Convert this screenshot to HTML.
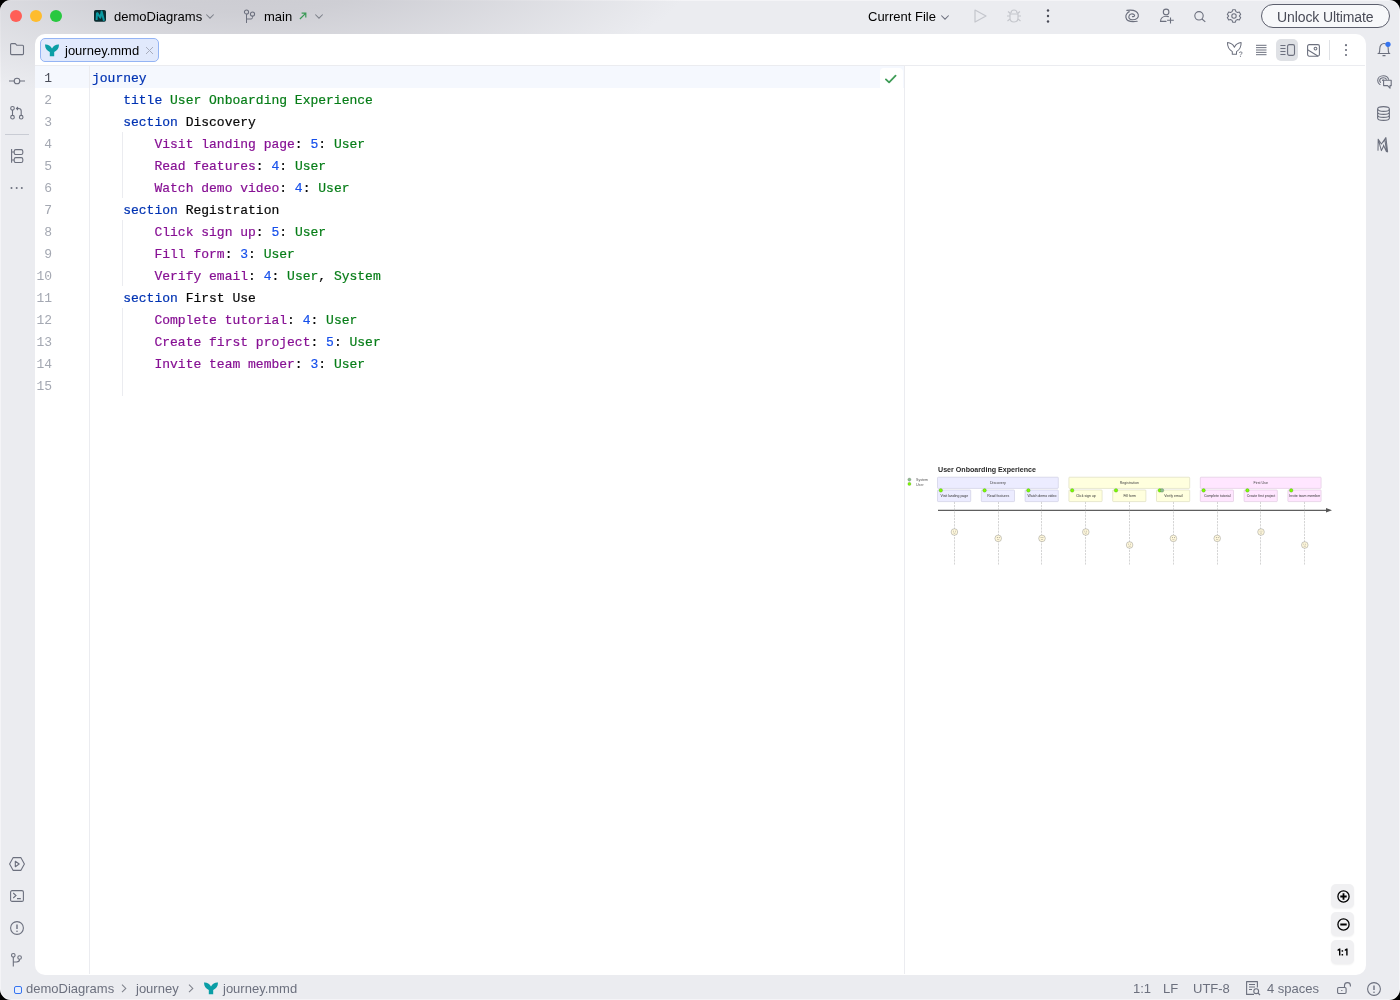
<!DOCTYPE html>
<html><head><meta charset="utf-8">
<style>
*{margin:0;padding:0;box-sizing:border-box}
html,body{width:1400px;height:1000px;overflow:hidden;background:#000}
body{font-family:"Liberation Sans",sans-serif;position:relative}
#win{will-change:transform;position:absolute;left:0;top:0;width:1400px;height:1000px;border-radius:11px;box-shadow:inset 0 0 0 1px rgba(255,255,255,0.45);overflow:hidden;background:#ebecf0}
#glow{position:absolute;left:-200px;top:-190px;width:900px;height:300px;border-radius:50%;
 background:radial-gradient(closest-side,rgba(201,201,207,1),rgba(204,204,210,0.92) 35%,rgba(235,236,240,0) 100%)}
.abs{position:absolute}
.tl{position:absolute;width:12px;height:12px;border-radius:50%;top:10px}
.ui{position:absolute;font-size:13px;color:#000;white-space:nowrap;line-height:16px}
svg.i{position:absolute;overflow:visible}
#editor{position:absolute;left:35px;top:34px;width:1330.5px;height:940.6px;background:#fff;border-radius:10px;overflow:hidden}
.code{position:absolute;left:57px;top:34px;-webkit-text-stroke:0.2px;font-family:"Liberation Mono",monospace;font-size:13px;line-height:22px;white-space:pre;color:#080808}
.ln{position:absolute;left:0;top:34px;width:17px;text-align:right;font-family:"Liberation Mono",monospace;font-size:13px;line-height:22px;color:#a4a8b2;white-space:pre}
.kw{color:#0033b3}
.str{color:#067d17}
.task{color:#871094}
.num{color:#1750eb}
.sb{position:absolute;top:981px;font-size:13px;line-height:16px;color:#6c707e;white-space:nowrap}
.zb{position:absolute;left:1296px;width:23px;height:23.5px;border-radius:5px;background:#f0f0f2;box-shadow:0 1px 2px rgba(0,0,0,0.06)}
</style></head>
<body>
<div id="win">
 <div id="glow"></div>
 <!-- traffic lights -->
 <div class="tl" style="left:10px;background:#ff5f57"></div>
 <div class="tl" style="left:30px;background:#febc2e"></div>
 <div class="tl" style="left:50px;background:#28c840"></div>

 <!-- title bar: project -->
 <svg class="i" style="left:94px;top:10px" width="12" height="12" viewBox="0 0 12 12">
  <rect x="0" y="0" width="12" height="11.8" rx="1.8" fill="#0a2d31"/>
  <path d="M3 2.6 L2.6 10 M3 2.6 L6.4 7.6 L7.6 1.6 L10 10.8" fill="none" stroke="#0a9aa2" stroke-width="2" stroke-linejoin="round"/>
 </svg>
 <div class="ui" style="left:114px;top:9px">demoDiagrams</div>
 <svg class="i" style="left:206px;top:14px" width="8" height="5" viewBox="0 0 8 5"><path d="M0.3 0.5 L4 4.2 L7.7 0.5" fill="none" stroke="#7d808a" stroke-width="1.05"/></svg>

 <!-- branch -->
 <svg class="i" style="left:243px;top:9px" width="14" height="15" viewBox="0 0 14 15">
  <circle cx="3.5" cy="3" r="2.1" fill="none" stroke="#6c707e" stroke-width="1.05"/>
  <circle cx="9.5" cy="5" r="2.1" fill="none" stroke="#6c707e" stroke-width="1.05"/>
  <path d="M3.5 5 V14 M9.5 7 V8.5 Q9.5 10 8 10 H3.5" fill="none" stroke="#6c707e" stroke-width="1"/>
 </svg>
 <div class="ui" style="left:264px;top:9px">main</div>
 <svg class="i" style="left:299px;top:12px" width="8" height="8" viewBox="0 0 8 8"><path d="M0.9 7 L6.6 1.3 M2.6 1.2 H6.8 V5.4" fill="none" stroke="#3a9a55" stroke-width="1.2"/></svg>
 <svg class="i" style="left:315px;top:14px" width="8" height="5" viewBox="0 0 8 5"><path d="M0.3 0.5 L4 4.2 L7.7 0.5" fill="none" stroke="#7d808a" stroke-width="1.05"/></svg>

 <!-- right toolbar -->
 <div class="ui" style="left:868px;top:9px">Current File</div>
 <svg class="i" style="left:941px;top:15px" width="8" height="5" viewBox="0 0 8 5"><path d="M0.3 0.5 L4 4.2 L7.7 0.5" fill="none" stroke="#6c707e" stroke-width="1.05"/></svg>
 <svg class="i" style="left:974px;top:9px" width="13" height="14" viewBox="0 0 13 14"><path d="M1 1 L12 7 L1 13 Z" fill="none" stroke="#c4c6cc" stroke-width="1.2" stroke-linejoin="round"/></svg>
 <svg class="i" style="left:1006px;top:9px" width="16" height="14" viewBox="0 0 16 14">
  <path d="M5 4 Q5 1 8 1 Q11 1 11 4 M4 5 H12 V9 Q12 13 8 13 Q4 13 4 9 Z M4 7 H1 M12 7 H15 M4 10 L1.5 12 M12 10 L14.5 12 M4.5 4.5 L2 2.5 M11.5 4.5 L14 2.5" fill="none" stroke="#c4c6cc" stroke-width="1.1"/>
 </svg>
 <svg class="i" style="left:1046px;top:9px" width="4" height="14" viewBox="0 0 4 14"><circle cx="2" cy="1.5" r="1.2" fill="#494b57"/><circle cx="2" cy="7" r="1.2" fill="#494b57"/><circle cx="2" cy="12.5" r="1.2" fill="#494b57"/></svg>

 <svg class="i" style="left:1120px;top:5px" width="60" height="23" viewBox="0 0 1400 537">
  <path d="M160 125 C280 110 400 130 425 220 C445 300 380 345 290 345 C220 345 195 300 210 255 C225 205 290 195 330 225 C355 250 330 280 290 270 M400 380 C330 392 250 395 190 365 C130 330 120 250 160 200 C175 180 195 165 215 155" fill="none" stroke="#6c707e" stroke-width="27" stroke-linecap="round"/>
 </svg>
 <svg class="i" style="left:1159px;top:8px" width="16" height="16" viewBox="0 0 16 16">
  <circle cx="7.1" cy="3.9" r="2.8" fill="none" stroke="#6c707e" stroke-width="1.1"/>
  <path d="M9.4 8.6 C8.6 8.4 7.8 8.3 7 8.3 C4 8.3 1.6 10.5 1.5 13.4 H7" fill="none" stroke="#6c707e" stroke-width="1.1" stroke-linecap="round"/>
  <path d="M11.5 9.4 V15.6 M8.1 12.3 H14.8" fill="none" stroke="#6c707e" stroke-width="1.1"/>
 </svg>
 <svg class="i" style="left:1194px;top:11px" width="12" height="11" viewBox="0 0 12 11">
  <circle cx="5" cy="4.8" r="4.2" fill="none" stroke="#6c707e" stroke-width="1.1"/>
  <path d="M8 8 L11.3 10.8" fill="none" stroke="#6c707e" stroke-width="1.1"/>
 </svg>
 <svg class="i" style="left:1227px;top:9px" width="14" height="14" viewBox="0 0 14 14">
  <path d="M5.6 0.8 H8.4 L8.9 2.6 L10.5 3.5 L12.3 3 L13.7 5.4 L12.4 6.8 V7.2 L13.7 8.6 L12.3 11 L10.5 10.5 L8.9 11.4 L8.4 13.2 H5.6 L5.1 11.4 L3.5 10.5 L1.7 11 L0.3 8.6 L1.6 7.2 V6.8 L0.3 5.4 L1.7 3 L3.5 3.5 L5.1 2.6 Z" fill="none" stroke="#6c707e" stroke-width="1.05" stroke-linejoin="round"/>
  <circle cx="7" cy="7" r="2.2" fill="none" stroke="#6c707e" stroke-width="1.05"/>
 </svg>
 <div class="abs" style="left:1261px;top:4.2px;width:129px;height:23.4px;border:1.6px solid #5c5f6d;border-radius:12px;background:#f7f8fa"></div>
 <div class="ui" style="left:1277px;top:9px;font-size:14px;letter-spacing:-0.1px;color:#494b57">Unlock Ultimate</div>

 <!-- left strip icons -->
 <svg class="i" style="left:10px;top:43px" width="15" height="12" viewBox="0 0 15 12">
  <path d="M0.6 1.6 Q0.6 0.6 1.6 0.6 H5.3 L6.9 2.3 H12.5 Q13.5 2.3 13.5 3.3 V10.6 Q13.5 11.6 12.5 11.6 H1.6 Q0.6 11.6 0.6 10.6 Z" fill="none" stroke="#6c707e" stroke-width="1.1" stroke-linejoin="round"/>
 </svg>
 <svg class="i" style="left:9px;top:76px" width="16" height="10" viewBox="0 0 16 10">
  <circle cx="8" cy="5" r="2.8" fill="none" stroke="#6c707e" stroke-width="1.1"/>
  <path d="M0 5 H5.2 M10.8 5 H16" stroke="#6c707e" stroke-width="1.1"/>
 </svg>
 <svg class="i" style="left:10px;top:106px" width="15" height="14" viewBox="0 0 15 14">
  <circle cx="2.5" cy="2.3" r="1.8" fill="none" stroke="#6c707e" stroke-width="1.1"/>
  <circle cx="2.5" cy="11.2" r="1.8" fill="none" stroke="#6c707e" stroke-width="1.1"/>
  <circle cx="11.2" cy="11.2" r="1.8" fill="none" stroke="#6c707e" stroke-width="1.1"/>
  <path d="M2.5 4.1 V9.4 M11.2 9.4 V5 Q11.2 2.5 8.7 2.5 H6.5 M8 1 L6.5 2.5 L8 4" fill="none" stroke="#6c707e" stroke-width="1.1"/>
 </svg>
 <div class="abs" style="left:5px;top:134px;width:24px;height:1px;background:#c9ccd4"></div>
 <svg class="i" style="left:11px;top:148px" width="13" height="16" viewBox="0 0 13 16">
  <path d="M0.6 1 V14.8 M0.6 4 H3.2 M0.6 12 H3.2" fill="none" stroke="#6c707e" stroke-width="1.1"/>
  <rect x="3.2" y="1.6" width="8.6" height="4.9" rx="1.6" fill="none" stroke="#6c707e" stroke-width="1.1"/>
  <rect x="3.2" y="9.6" width="8.6" height="4.9" rx="1.6" fill="none" stroke="#6c707e" stroke-width="1.1"/>
 </svg>
 <svg class="i" style="left:10px;top:186px" width="14" height="4" viewBox="0 0 14 4">
  <circle cx="1.5" cy="2" r="1" fill="#6c707e"/><circle cx="6.7" cy="2" r="1" fill="#6c707e"/><circle cx="11.8" cy="2" r="1" fill="#6c707e"/>
 </svg>

 <svg class="i" style="left:9px;top:857px" width="16" height="14" viewBox="0 0 16 14">
  <path d="M4.2 0.6 H11.8 L15.4 7 L11.8 13.4 H4.2 L0.6 7 Z" fill="none" stroke="#6c707e" stroke-width="1.1" stroke-linejoin="round"/>
  <path d="M6.3 4.3 L10.2 7 L6.3 9.7 Z" fill="none" stroke="#6c707e" stroke-width="1.1" stroke-linejoin="round"/>
 </svg>
 <svg class="i" style="left:10px;top:890px" width="14" height="12" viewBox="0 0 14 12">
  <rect x="0.6" y="0.6" width="12.8" height="10.8" rx="1.5" fill="none" stroke="#6c707e" stroke-width="1.1"/>
  <path d="M3.2 3 L6 5.5 L3.2 8 M7 8.6 H10.8" fill="none" stroke="#6c707e" stroke-width="1.1"/>
 </svg>
 <svg class="i" style="left:10px;top:921px" width="14" height="14" viewBox="0 0 14 14">
  <circle cx="7" cy="7" r="6.4" fill="none" stroke="#6c707e" stroke-width="1.1"/>
  <path d="M7 3.5 V8" stroke="#6c707e" stroke-width="1.4"/><circle cx="7" cy="10.2" r="0.8" fill="#6c707e"/>
 </svg>
 <svg class="i" style="left:11px;top:953px" width="11" height="14" viewBox="0 0 11 14">
  <circle cx="2.3" cy="2.3" r="1.8" fill="none" stroke="#6c707e" stroke-width="1.1"/>
  <circle cx="8.6" cy="4.5" r="1.8" fill="none" stroke="#6c707e" stroke-width="1.1"/>
  <path d="M2.3 4.1 V13.5 M8.6 6.3 Q8.6 9 5.5 9 H2.3" fill="none" stroke="#6c707e" stroke-width="1.1"/>
 </svg>

 <!-- right strip icons -->
 <svg class="i" style="left:1377px;top:42px" width="14" height="15" viewBox="0 0 14 15">
  <path d="M2 11.5 C2.8 10 2.8 9 2.8 6.5 C2.8 3.5 4.8 1.5 7 1.5 C9.2 1.5 11.2 3.5 11.2 6.5 C11.2 9 11.2 10 12 11.5 Z M0.6 11.5 H13.2 M5.5 13.6 H8.5" fill="none" stroke="#6c707e" stroke-width="1.1" stroke-linejoin="round"/>
  <circle cx="11" cy="2.3" r="2.6" fill="#3574f0"/>
 </svg>
 <svg class="i" style="left:1377px;top:75px" width="15" height="14" viewBox="0 0 15 14">
  <path d="M3 9.5 C1.3 8.5 0.7 7 0.7 5.5 C0.7 2.8 3 0.7 6.3 0.7 C9 0.7 11 2.2 11.6 4.3 M3.5 7.3 C3 6.8 2.7 6.1 2.7 5.5 C2.7 3.8 4.2 2.7 6.3 2.7 C7.7 2.7 8.9 3.3 9.4 4.3 M5.6 5.4 C5.6 5 5.9 4.7 6.3 4.7" fill="none" stroke="#6c707e" stroke-width="1.1" stroke-linecap="round"/>
  <path d="M6.6 5.2 H14.2 V10.6 H13 V13.2 L10.6 10.6 H6.6 Z" fill="#ebecf0" stroke="#6c707e" stroke-width="1.1" stroke-linejoin="round"/>
 </svg>
 <svg class="i" style="left:1377px;top:106px" width="13" height="15" viewBox="0 0 13 15">
  <ellipse cx="6.5" cy="3" rx="5.9" ry="2.4" fill="none" stroke="#6c707e" stroke-width="1.1"/>
  <path d="M0.6 3 V12 C0.6 13.3 3.2 14.4 6.5 14.4 C9.8 14.4 12.4 13.3 12.4 12 V3 M0.6 6 C0.6 7.3 3.2 8.4 6.5 8.4 C9.8 8.4 12.4 7.3 12.4 6 M0.6 9 C0.6 10.3 3.2 11.4 6.5 11.4 C9.8 11.4 12.4 10.3 12.4 9" fill="none" stroke="#6c707e" stroke-width="1.1"/>
 </svg>
 <svg class="i" style="left:1377px;top:137px" width="12" height="16" viewBox="0 0 12 16">
  <path d="M1.2 2.2 L1 13.2 M1.2 2.2 L4.4 7 L8.9 0.6 M1.2 2.2 L4.4 13.6 L6.6 9 M8.9 0.6 L10.6 14.9 M8.2 2.2 L6.2 5 M8 3.5 L9.6 14.6 M6.4 8 L9.4 14.6" fill="none" stroke="#6c707e" stroke-width="1.05" stroke-linejoin="round" stroke-linecap="round"/>
 </svg>

 <!-- status bar -->
 <div class="abs" style="left:14px;top:985.5px;width:8px;height:8px;border:1.2px solid #3574f0;border-radius:2px;background:#e8eefc"></div>
 <div class="sb" style="left:26px">demoDiagrams</div>
 <svg class="i" style="left:121px;top:984px" width="6" height="9" viewBox="0 0 6 9"><path d="M1 0.6 L4.8 4.4 L1 8.2" fill="none" stroke="#7f828c" stroke-width="1.05"/></svg>
 <div class="sb" style="left:136px">journey</div>
 <svg class="i" style="left:188px;top:984px" width="6" height="9" viewBox="0 0 6 9"><path d="M1 0.6 L4.8 4.4 L1 8.2" fill="none" stroke="#7f828c" stroke-width="1.05"/></svg>
 <svg class="i" style="left:204px;top:982px" width="14" height="12" viewBox="0 0 14 12">
  <path d="M0 0.6 C2.5 0.3 5.5 1.5 7 4.5 C8.5 1.5 11.5 0.3 14 0.6 C14 4.5 12 7 9.2 8 V12.3 H4.8 V8 C2 7 0 4.5 0 0.6 Z" fill="#0a9ea6"/>
 </svg>
 <div class="sb" style="left:223px">journey.mmd</div>

 <div class="sb" style="left:1133px">1:1</div>
 <div class="sb" style="left:1163px">LF</div>
 <div class="sb" style="left:1193px">UTF-8</div>
 <svg class="i" style="left:1246px;top:981px" width="15" height="15" viewBox="0 0 15 15">
  <path d="M8 13.4 H0.6 V0.6 H11.4 V6.5" fill="none" stroke="#6c707e" stroke-width="1.1" stroke-linejoin="round"/>
  <path d="M3 3.5 H9 M3 6 H9 M3 8.5 H6" stroke="#6c707e" stroke-width="1.1"/>
  <circle cx="10.2" cy="10.2" r="2.4" fill="none" stroke="#6c707e" stroke-width="1.1"/>
  <path d="M12 12 L14 14" stroke="#6c707e" stroke-width="1.1"/>
 </svg>
 <div class="sb" style="left:1267px">4 spaces</div>
 <svg class="i" style="left:1337px;top:982px" width="14" height="12" viewBox="0 0 14 12">
  <rect x="0.6" y="5.5" width="8.5" height="6" rx="1.2" fill="none" stroke="#6c707e" stroke-width="1.1"/>
  <path d="M7.5 5.5 V3.5 C7.5 1.8 8.8 0.6 10.5 0.6 C12.2 0.6 13.4 1.8 13.4 3.5 V4.5" fill="none" stroke="#6c707e" stroke-width="1.1"/>
  <path d="M4.8 8 V9" stroke="#6c707e" stroke-width="1.2"/>
 </svg>
 <svg class="i" style="left:1367px;top:982px" width="14" height="14" viewBox="0 0 14 14">
  <circle cx="7" cy="7" r="6.4" fill="none" stroke="#6c707e" stroke-width="1.1"/>
  <path d="M7 3.5 V8" stroke="#6c707e" stroke-width="1.4"/><circle cx="7" cy="10.2" r="0.8" fill="#6c707e"/>
 </svg>

 <!-- editor -->
 <div id="editor">
  <!-- tab -->
  <div class="abs" style="left:5px;top:4px;width:119px;height:24px;border:1px solid #94b4f4;border-radius:5px;background:#e1e9fc"></div>
  <svg class="i" style="left:10px;top:9.5px" width="14" height="12" viewBox="0 0 14 12">
   <path d="M0 0.6 C2.5 0.3 5.5 1.5 7 4.5 C8.5 1.5 11.5 0.3 14 0.6 C14 4.5 12 7 9.2 8 V12.3 H4.8 V8 C2 7 0 4.5 0 0.6 Z" fill="#0a9ea6"/>
  </svg>
  <div class="ui" style="left:30px;top:9px">journey.mmd</div>
  <svg class="i" style="left:110.5px;top:13px" width="7" height="7" viewBox="0 0 7 7"><path d="M0 0 L7 7 M7 0 L0 7" stroke="#a8adbd" stroke-width="1"/></svg>

  <!-- editor toolbar -->
  <svg class="i" style="left:1191px;top:8px" width="18" height="16" viewBox="0 0 18 16">
   <path d="M1.5 0.6 C4.5 0.8 7 2.5 8.4 5.2 C9.8 2.5 12.3 0.8 15.1 0.6 C15.3 4.5 13 8 10.5 9.6 V12.3 H6.3 V9.6 C3.8 8 1.3 4.5 1.5 0.6 Z" fill="none" stroke="#6c707e" stroke-width="1.05" stroke-linejoin="round"/>
   <path d="M13.4 11 C13.4 10.2 14 9.9 14.7 9.9 C15.5 9.9 16.2 10.3 16.2 11 C16.2 11.8 14.4 12.4 14.4 13.3" fill="none" stroke="#6c707e" stroke-width="0.9"/>
   <circle cx="14.4" cy="14.5" r="0.55" fill="#6c707e"/>
  </svg>
  <svg class="i" style="left:1220.5px;top:10px" width="11" height="12" viewBox="0 0 11 12">
   <path d="M0 1.3 H10.5 M0 3.65 H10.5 M0 6 H10.5 M0 8.35 H10.5 M0 10.7 H10.5" stroke="#6c707e" stroke-width="1"/>
  </svg>
  <div class="abs" style="left:1241px;top:5px;width:22px;height:22px;border-radius:5px;background:#dfe1e5"></div>
  <svg class="i" style="left:1244.5px;top:10px" width="15" height="12" viewBox="0 0 15 12">
   <path d="M0.4 1.5 H5.5 M0.4 4.5 H5.5 M0.4 7.5 H5.5 M0.4 10.5 H5.5" stroke="#6c707e" stroke-width="1.05"/>
   <rect x="7.6" y="0.6" width="6.9" height="10.8" rx="1.6" fill="none" stroke="#6c707e" stroke-width="1.1"/>
  </svg>
  <svg class="i" style="left:1271.5px;top:9.5px" width="13" height="13" viewBox="0 0 13 13">
   <rect x="0.6" y="0.6" width="11.8" height="11.6" rx="1.6" fill="none" stroke="#6c707e" stroke-width="1.1"/>
   <circle cx="8.5" cy="4.6" r="1.4" fill="none" stroke="#6c707e" stroke-width="1.05"/>
   <path d="M0.6 5.8 L10.8 12" stroke="#6c707e" stroke-width="1.1"/>
  </svg>
  <div class="abs" style="left:1294px;top:6px;width:1px;height:20px;background:#dfe1e5"></div>
  <svg class="i" style="left:1309px;top:10px" width="4" height="12" viewBox="0 0 4 12"><circle cx="2" cy="1.2" r="1.1" fill="#6c707e"/><circle cx="2" cy="6" r="1.1" fill="#6c707e"/><circle cx="2" cy="11" r="1.1" fill="#6c707e"/></svg>

  <div class="abs" style="left:0;top:31px;width:1330px;height:1px;background:#ebecf0"></div>
  <!-- current line -->
  <div class="abs" style="left:0;top:32px;width:869px;height:22px;background:#f5f8fe"></div>
  <div class="abs" style="left:845px;top:34px;width:22.5px;height:24px;border-radius:4px;background:#fff"></div>
  <svg class="i" style="left:850px;top:41px" width="12" height="9" viewBox="0 0 12 9"><path d="M0.9 4.4 L4.1 7.4 L10.6 0.7" fill="none" stroke="#3f9c57" stroke-width="1.8" stroke-linecap="round" stroke-linejoin="round"/></svg>
  <div class="abs" style="left:54px;top:32px;width:1px;height:908px;background:#ebecf0"></div>
  <div class="abs" style="left:869px;top:32px;width:1px;height:908px;background:#ebecf0"></div>
  <!-- indent guides -->
  <div class="abs" style="left:87px;top:98px;width:1px;height:66px;background:#ebecf0"></div>
  <div class="abs" style="left:87px;top:186px;width:1px;height:66px;background:#ebecf0"></div>
  <div class="abs" style="left:87px;top:274px;width:1px;height:88px;background:#ebecf0"></div>
  <div class="ln"><span style="color:#4a4d59">1</span>
2
3
4
5
6
7
8
9
10
11
12
13
14
15</div>
  <div class="code"><span class="kw">journey</span>
    <span class="kw">title</span> <span class="str">User Onboarding Experience</span>
    <span class="kw">section</span> Discovery
        <span class="task">Visit landing page</span>: <span class="num">5</span>: <span class="str">User</span>
        <span class="task">Read features</span>: <span class="num">4</span>: <span class="str">User</span>
        <span class="task">Watch demo video</span>: <span class="num">4</span>: <span class="str">User</span>
    <span class="kw">section</span> Registration
        <span class="task">Click sign up</span>: <span class="num">5</span>: <span class="str">User</span>
        <span class="task">Fill form</span>: <span class="num">3</span>: <span class="str">User</span>
        <span class="task">Verify email</span>: <span class="num">4</span>: <span class="str">User</span>, <span class="str">System</span>
    <span class="kw">section</span> First Use
        <span class="task">Complete tutorial</span>: <span class="num">4</span>: <span class="str">User</span>
        <span class="task">Create first project</span>: <span class="num">5</span>: <span class="str">User</span>
        <span class="task">Invite team member</span>: <span class="num">3</span>: <span class="str">User</span>
</div>

  <!-- DIAGRAM -->
  <svg id="diag" class="i" style="left:0;top:0" width="1330" height="940" viewBox="35 34 1330 940">
<text transform="translate(938.00,471.90) scale(0.1)" text-anchor="start" font-family="Liberation Sans" font-size="74.0" fill="#2a2a2a" font-weight="bold" textLength="980" lengthAdjust="spacingAndGlyphs">User Onboarding Experience</text>
<circle cx="909.4" cy="479.6" r="1.6" fill="#8fbc8f" stroke="#555" stroke-width="0.22"/>
<circle cx="909.4" cy="483.9" r="1.6" fill="#7cfc00" stroke="#555" stroke-width="0.22"/>
<text transform="translate(916.00,481.10) scale(0.1)" text-anchor="start" font-family="Liberation Sans" font-size="36.0" fill="#555" >System</text>
<text transform="translate(916.00,485.50) scale(0.1)" text-anchor="start" font-family="Liberation Sans" font-size="36.0" fill="#555" >User</text>
<rect x="937.50" y="477.2" width="120.80" height="11.2" rx="0.7" fill="#ececff" stroke="#c9c9df" stroke-width="0.6"/>
<text transform="translate(997.90,484.10) scale(0.1)" text-anchor="middle" font-family="Liberation Sans" font-size="36.0" fill="#444" >Discovery</text>
<rect x="1068.90" y="477.2" width="120.80" height="11.2" rx="0.7" fill="#ffffde" stroke="#d6d6b8" stroke-width="0.6"/>
<text transform="translate(1129.30,484.10) scale(0.1)" text-anchor="middle" font-family="Liberation Sans" font-size="36.0" fill="#444" >Registration</text>
<rect x="1200.30" y="477.2" width="120.80" height="11.2" rx="0.7" fill="#ffe6ff" stroke="#dcc4dc" stroke-width="0.6"/>
<text transform="translate(1260.70,484.10) scale(0.1)" text-anchor="middle" font-family="Liberation Sans" font-size="36.0" fill="#444" >First Use</text>
<line x1="938" y1="510.3" x2="1327" y2="510.3" stroke="#5e5e5e" stroke-width="1.2"/>
<path d="M1326 508 L1332 510.3 L1326 512.6 Z" fill="#555"/>
<line x1="954.50" y1="501.8" x2="954.50" y2="564.6" stroke="#b8b8b8" stroke-width="0.6" stroke-dasharray="2.2 1"/>
<rect x="937.50" y="490" width="33.20" height="11.6" rx="0.7" fill="#ececff" stroke="#c9c9df" stroke-width="0.6"/>
<text transform="translate(954.40,497.00) scale(0.1)" text-anchor="middle" font-family="Liberation Sans" font-size="35.0" fill="#333" >Visit landing page</text>
<circle cx="940.80" cy="490.4" r="1.8" fill="#7cfc00" stroke="#3a6a3a" stroke-width="0.25"/>
<circle cx="954.40" cy="532.0" r="3.3" fill="#fff8dc" stroke="#8a8a8a" stroke-width="0.45"/>
<circle cx="953.45" cy="531.10" r="0.38" fill="#555"/><circle cx="955.35" cy="531.10" r="0.38" fill="#555"/>
<path d="M953.30 532.80 Q954.40 533.80 955.50 532.80" fill="none" stroke="#666" stroke-width="0.35"/>
<line x1="998.50" y1="501.8" x2="998.50" y2="564.6" stroke="#b8b8b8" stroke-width="0.6" stroke-dasharray="2.2 1"/>
<rect x="981.30" y="490" width="33.20" height="11.6" rx="0.7" fill="#ececff" stroke="#c9c9df" stroke-width="0.6"/>
<text transform="translate(998.20,497.00) scale(0.1)" text-anchor="middle" font-family="Liberation Sans" font-size="35.0" fill="#333" >Read features</text>
<circle cx="984.60" cy="490.4" r="1.8" fill="#7cfc00" stroke="#3a6a3a" stroke-width="0.25"/>
<circle cx="998.20" cy="538.4" r="3.3" fill="#fff8dc" stroke="#8a8a8a" stroke-width="0.45"/>
<circle cx="997.25" cy="537.50" r="0.38" fill="#555"/><circle cx="999.15" cy="537.50" r="0.38" fill="#555"/>
<path d="M997.10 539.20 Q998.20 540.20 999.30 539.20" fill="none" stroke="#666" stroke-width="0.35"/>
<line x1="1041.50" y1="501.8" x2="1041.50" y2="564.6" stroke="#b8b8b8" stroke-width="0.6" stroke-dasharray="2.2 1"/>
<rect x="1025.10" y="490" width="33.20" height="11.6" rx="0.7" fill="#ececff" stroke="#c9c9df" stroke-width="0.6"/>
<text transform="translate(1042.00,497.00) scale(0.1)" text-anchor="middle" font-family="Liberation Sans" font-size="35.0" fill="#333" >Watch demo video</text>
<circle cx="1028.40" cy="490.4" r="1.8" fill="#7cfc00" stroke="#3a6a3a" stroke-width="0.25"/>
<circle cx="1042.00" cy="538.4" r="3.3" fill="#fff8dc" stroke="#8a8a8a" stroke-width="0.45"/>
<circle cx="1041.05" cy="537.50" r="0.38" fill="#555"/><circle cx="1042.95" cy="537.50" r="0.38" fill="#555"/>
<path d="M1040.90 539.20 Q1042.00 540.20 1043.10 539.20" fill="none" stroke="#666" stroke-width="0.35"/>
<line x1="1085.50" y1="501.8" x2="1085.50" y2="564.6" stroke="#b8b8b8" stroke-width="0.6" stroke-dasharray="2.2 1"/>
<rect x="1068.90" y="490" width="33.20" height="11.6" rx="0.7" fill="#ffffde" stroke="#d6d6b8" stroke-width="0.6"/>
<text transform="translate(1085.80,497.00) scale(0.1)" text-anchor="middle" font-family="Liberation Sans" font-size="35.0" fill="#333" >Click sign up</text>
<circle cx="1072.20" cy="490.4" r="1.8" fill="#7cfc00" stroke="#3a6a3a" stroke-width="0.25"/>
<circle cx="1085.80" cy="532.0" r="3.3" fill="#fff8dc" stroke="#8a8a8a" stroke-width="0.45"/>
<circle cx="1084.85" cy="531.10" r="0.38" fill="#555"/><circle cx="1086.75" cy="531.10" r="0.38" fill="#555"/>
<path d="M1084.70 532.80 Q1085.80 533.80 1086.90 532.80" fill="none" stroke="#666" stroke-width="0.35"/>
<line x1="1129.50" y1="501.8" x2="1129.50" y2="564.6" stroke="#b8b8b8" stroke-width="0.6" stroke-dasharray="2.2 1"/>
<rect x="1112.70" y="490" width="33.20" height="11.6" rx="0.7" fill="#ffffde" stroke="#d6d6b8" stroke-width="0.6"/>
<text transform="translate(1129.60,497.00) scale(0.1)" text-anchor="middle" font-family="Liberation Sans" font-size="35.0" fill="#333" >Fill form</text>
<circle cx="1116.00" cy="490.4" r="1.8" fill="#7cfc00" stroke="#3a6a3a" stroke-width="0.25"/>
<circle cx="1129.60" cy="545.0" r="3.3" fill="#fff8dc" stroke="#8a8a8a" stroke-width="0.45"/>
<circle cx="1128.65" cy="544.10" r="0.38" fill="#555"/><circle cx="1130.55" cy="544.10" r="0.38" fill="#555"/>
<path d="M1128.50 546.20 H1130.70" fill="none" stroke="#666" stroke-width="0.35"/>
<line x1="1173.50" y1="501.8" x2="1173.50" y2="564.6" stroke="#b8b8b8" stroke-width="0.6" stroke-dasharray="2.2 1"/>
<rect x="1156.50" y="490" width="33.20" height="11.6" rx="0.7" fill="#ffffde" stroke="#d6d6b8" stroke-width="0.6"/>
<text transform="translate(1173.40,497.00) scale(0.1)" text-anchor="middle" font-family="Liberation Sans" font-size="35.0" fill="#333" >Verify email</text>
<circle cx="1159.80" cy="490.4" r="1.8" fill="#7cfc00" stroke="#3a6a3a" stroke-width="0.25"/>
<circle cx="1162.00" cy="490.4" r="1.8" fill="#8fbc8f" stroke="#3a6a3a" stroke-width="0.25"/>
<circle cx="1173.40" cy="538.4" r="3.3" fill="#fff8dc" stroke="#8a8a8a" stroke-width="0.45"/>
<circle cx="1172.45" cy="537.50" r="0.38" fill="#555"/><circle cx="1174.35" cy="537.50" r="0.38" fill="#555"/>
<path d="M1172.30 539.20 Q1173.40 540.20 1174.50 539.20" fill="none" stroke="#666" stroke-width="0.35"/>
<line x1="1217.50" y1="501.8" x2="1217.50" y2="564.6" stroke="#b8b8b8" stroke-width="0.6" stroke-dasharray="2.2 1"/>
<rect x="1200.30" y="490" width="33.20" height="11.6" rx="0.7" fill="#ffe6ff" stroke="#dcc4dc" stroke-width="0.6"/>
<text transform="translate(1217.20,497.00) scale(0.1)" text-anchor="middle" font-family="Liberation Sans" font-size="35.0" fill="#333" >Complete tutorial</text>
<circle cx="1203.60" cy="490.4" r="1.8" fill="#7cfc00" stroke="#3a6a3a" stroke-width="0.25"/>
<circle cx="1217.20" cy="538.4" r="3.3" fill="#fff8dc" stroke="#8a8a8a" stroke-width="0.45"/>
<circle cx="1216.25" cy="537.50" r="0.38" fill="#555"/><circle cx="1218.15" cy="537.50" r="0.38" fill="#555"/>
<path d="M1216.10 539.20 Q1217.20 540.20 1218.30 539.20" fill="none" stroke="#666" stroke-width="0.35"/>
<line x1="1260.50" y1="501.8" x2="1260.50" y2="564.6" stroke="#b8b8b8" stroke-width="0.6" stroke-dasharray="2.2 1"/>
<rect x="1244.10" y="490" width="33.20" height="11.6" rx="0.7" fill="#ffe6ff" stroke="#dcc4dc" stroke-width="0.6"/>
<text transform="translate(1261.00,497.00) scale(0.1)" text-anchor="middle" font-family="Liberation Sans" font-size="35.0" fill="#333" >Create first project</text>
<circle cx="1247.40" cy="490.4" r="1.8" fill="#7cfc00" stroke="#3a6a3a" stroke-width="0.25"/>
<circle cx="1261.00" cy="532.0" r="3.3" fill="#fff8dc" stroke="#8a8a8a" stroke-width="0.45"/>
<circle cx="1260.05" cy="531.10" r="0.38" fill="#555"/><circle cx="1261.95" cy="531.10" r="0.38" fill="#555"/>
<path d="M1259.90 532.80 Q1261.00 533.80 1262.10 532.80" fill="none" stroke="#666" stroke-width="0.35"/>
<line x1="1304.50" y1="501.8" x2="1304.50" y2="564.6" stroke="#b8b8b8" stroke-width="0.6" stroke-dasharray="2.2 1"/>
<rect x="1287.90" y="490" width="33.20" height="11.6" rx="0.7" fill="#ffe6ff" stroke="#dcc4dc" stroke-width="0.6"/>
<text transform="translate(1304.80,497.00) scale(0.1)" text-anchor="middle" font-family="Liberation Sans" font-size="35.0" fill="#333" >Invite team member</text>
<circle cx="1291.20" cy="490.4" r="1.8" fill="#7cfc00" stroke="#3a6a3a" stroke-width="0.25"/>
<circle cx="1304.80" cy="545.0" r="3.3" fill="#fff8dc" stroke="#8a8a8a" stroke-width="0.45"/>
<circle cx="1303.85" cy="544.10" r="0.38" fill="#555"/><circle cx="1305.75" cy="544.10" r="0.38" fill="#555"/>
<path d="M1303.70 546.20 H1305.90" fill="none" stroke="#666" stroke-width="0.35"/>
</svg>

  <!-- zoom buttons -->
  <div class="zb" style="top:850px"></div>
  <div class="zb" style="top:878px"></div>
  <div class="zb" style="top:906px"></div>
  <svg class="i" style="left:1301.5px;top:855.5px" width="13" height="13" viewBox="0 0 13 13">
   <circle cx="6.5" cy="6.5" r="5.6" fill="none" stroke="#000" stroke-width="1.3"/>
   <path d="M6.5 3.3 V9.7 M3.3 6.5 H9.7" stroke="#000" stroke-width="1.8"/>
  </svg>
  <svg class="i" style="left:1301.5px;top:883.5px" width="13" height="13" viewBox="0 0 13 13">
   <circle cx="6.5" cy="6.5" r="5.6" fill="none" stroke="#000" stroke-width="1.3"/>
   <path d="M3.3 6.5 H9.7" stroke="#000" stroke-width="1.8"/>
  </svg>
  <svg class="i" style="left:1301px;top:913px" width="14" height="10" viewBox="1336 947 14 10">
   <path d="M1337.6 949.6 L1339.2 948.5 H1340.4 V955.5 H1339 V950.4 L1337.6 951.1 Z M1344.8 949.6 L1346.4 948.5 H1347.6 V955.5 H1346.2 V950.4 L1344.8 951.1 Z" fill="#000"/>
   <rect x="1341.6" y="950.2" width="1.5" height="1.5" fill="#000"/><rect x="1341.6" y="954" width="1.5" height="1.5" fill="#000"/>
  </svg>
 </div>
</div>
</body></html>
